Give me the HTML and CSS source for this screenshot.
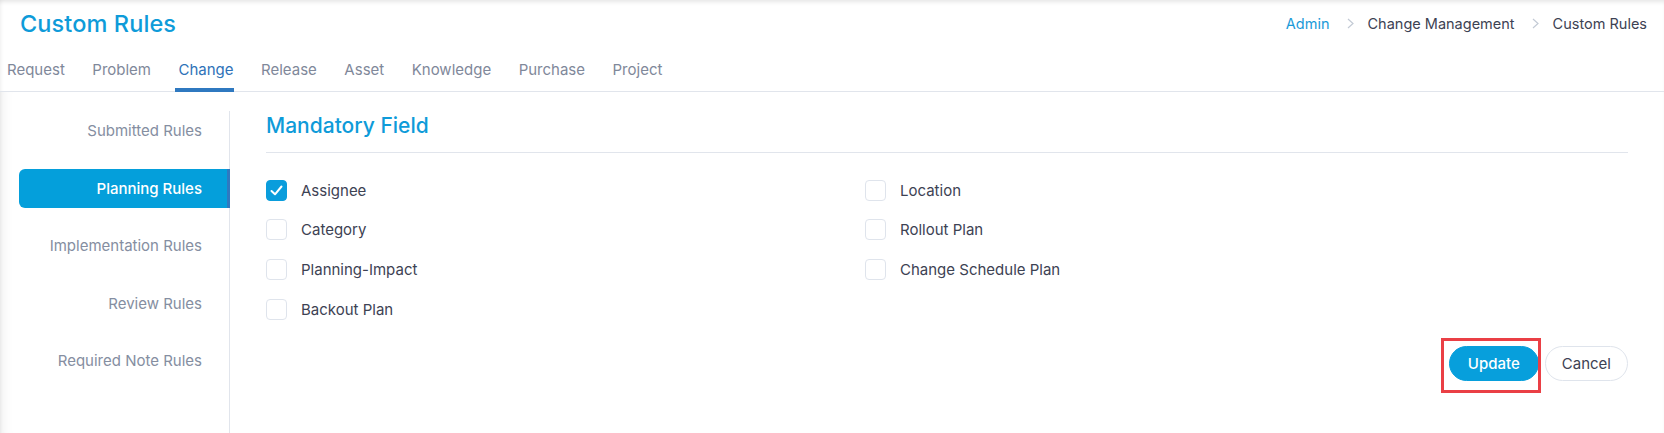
FILE: index.html
```html
<!DOCTYPE html>
<html>
<head>
<meta charset="utf-8">
<link rel="stylesheet" href="styles.css">
</head>
<body>
<div class="page">
  <header class="header">
    <h1 class="title">Custom Rules</h1>
    <nav class="crumbs">
      <span class="crumb link">Admin</span>
      <svg class="chev" width="7" height="11" viewBox="0 0 7 11"><polyline points="1,1 6,5.5 1,10" fill="none" stroke="#c3cad5" stroke-width="1.2"/></svg>
      <span class="crumb">Change Management</span>
      <svg class="chev" width="7" height="11" viewBox="0 0 7 11"><polyline points="1,1 6,5.5 1,10" fill="none" stroke="#c3cad5" stroke-width="1.2"/></svg>
      <span class="crumb">Custom Rules</span>
    </nav>
  </header>
  <div class="tabs">
    <span class="tab">Request</span>
    <span class="tab">Problem</span>
    <span class="tab active">Change</span>
    <span class="tab">Release</span>
    <span class="tab">Asset</span>
    <span class="tab">Knowledge</span>
    <span class="tab">Purchase</span>
    <span class="tab">Project</span>
  </div>
  <div class="main">
    <aside class="side">
      <div class="side-item">Submitted Rules</div>
      <div class="side-item active">Planning Rules</div>
      <div class="side-item">Implementation Rules</div>
      <div class="side-item">Review Rules</div>
      <div class="side-item">Required Note Rules</div>
    </aside>
    <section class="content">
      <h2 class="section-title">Mandatory Field</h2>
      <div class="fields">
        <label class="field"><span class="box checked"><svg width="13" height="11" viewBox="0 0 13 11"><polyline points="1.5,6 5,9.3 11.5,1.5" fill="none" stroke="#fff" stroke-width="2" stroke-linecap="round" stroke-linejoin="round"/></svg></span>Assignee</label>
        <label class="field"><span class="box"></span>Location</label>
        <label class="field"><span class="box"></span>Category</label>
        <label class="field"><span class="box"></span>Rollout Plan</label>
        <label class="field"><span class="box"></span>Planning-Impact</label>
        <label class="field"><span class="box"></span>Change Schedule Plan</label>
        <label class="field"><span class="box"></span>Backout Plan</label>
      </div>
      <div class="actions">
        <button class="btn primary">Update</button>
        <button class="btn">Cancel</button>
      </div>
    </section>
  </div>
  <div class="highlight"></div>
</div>
</body>
</html>
```
FILE: styles.css
```css
* { box-sizing: border-box; }
html, body { margin: 0; padding: 0; background: #fff; }
body { font-family: Inter, "Noto Sans", sans-serif; color: #3d4253; }

.page {
  position: relative;
  width: 1664px;
  height: 433px;
  overflow: hidden;
  box-shadow: inset 0 4px 4px -2px rgba(0, 0, 0, 0.10), inset 4px 0 4px -3px rgba(0, 0, 0, 0.05);
}

.header {
  display: flex;
  justify-content: space-between;
  align-items: center;
  height: 46px;
  padding: 0 17px 0 20px;
}
.title {
  margin: 0;
  font-size: 23.5px;
  font-weight: 500;
  color: #0e9bd9;
  letter-spacing: 0.1px;
}
.crumbs {
  display: flex;
  align-items: center;
  font-size: 14.5px;
  color: #3d4253;
}
.crumb.link { color: #1a9ad8; }
.chev { margin: 1px 14px 0 17px; }

.tabs {
  display: flex;
  gap: 27.5px;
  height: 46px;
  padding-left: 7px;
  border-bottom: 1px solid #e1e5ec;
}
.tab {
  position: relative;
  display: flex;
  align-items: center;
  padding-top: 1px;
  font-size: 15px;
  color: #7f889a;
}
.tab.active { color: #2e72b8; }
.tab.active::after {
  content: "";
  position: absolute;
  left: -4px;
  right: 0;
  bottom: -1px;
  height: 4px;
  background: #2f79c0;
}

.main {
  display: flex;
  padding-top: 19px;
  height: 341px;
  box-shadow: inset 14px 0 12px -10px rgba(0, 0, 0, 0.05);
}
.side {
  width: 230px;
  flex: none;
  display: flex;
  flex-direction: column;
  gap: 18.5px;
  border-right: 1px solid #e1e5ec;
}
.side-item {
  height: 39px;
  display: flex;
  align-items: center;
  justify-content: flex-end;
  padding-right: 27px;
  font-size: 15px;
  color: #858ea1;
}
.side-item.active {
  margin-left: 19px;
  margin-right: -1px;
  background: #049fdb;
  color: #fff;
  font-weight: 500;
  border-radius: 6px 0 0 6px;
  border-right: 3px solid #2f79c0;
  padding-right: 25px;
}

.content {
  flex: 1;
  padding: 0 36px 0 36px;
}
.section-title {
  margin: 0;
  height: 42px;
  line-height: 30px;
  font-size: 21px;
  font-weight: 500;
  color: #0e9bd9;
  border-bottom: 1px solid #e1e5ec;
}
.fields {
  display: grid;
  grid-template-columns: 599px 1fr;
  grid-auto-rows: 22px;
  row-gap: 17.7px;
  margin-top: 26px;
}
.field {
  display: flex;
  align-items: center;
  gap: 14px;
  font-size: 15px;
  color: #3d4253;
}
.box {
  width: 21px;
  height: 21px;
  flex: none;
  border: 1px solid #dfe4ec;
  border-radius: 4px;
  display: flex;
  align-items: center;
  justify-content: center;
}
.box.checked {
  background: #0a9ddc;
  border-color: #0a9ddc;
}

.actions {
  display: flex;
  justify-content: flex-end;
  gap: 6px;
  margin-top: 26px;
}
.btn {
  height: 35px;
  border-radius: 18px;
  border: 1px solid #dfe4ec;
  background: #fff;
  font-family: Inter, "Noto Sans", sans-serif;
  font-size: 15px;
  color: #3d4253;
  padding: 0 16px;
}
.btn.primary {
  width: 90px;
  background: #079fdc;
  border-color: #079fdc;
  color: #fff;
  font-weight: 500;
}

.highlight {
  position: absolute;
  left: 1441px;
  top: 338px;
  width: 100px;
  height: 55px;
  border: 3px solid #ea3f45;
}
```
